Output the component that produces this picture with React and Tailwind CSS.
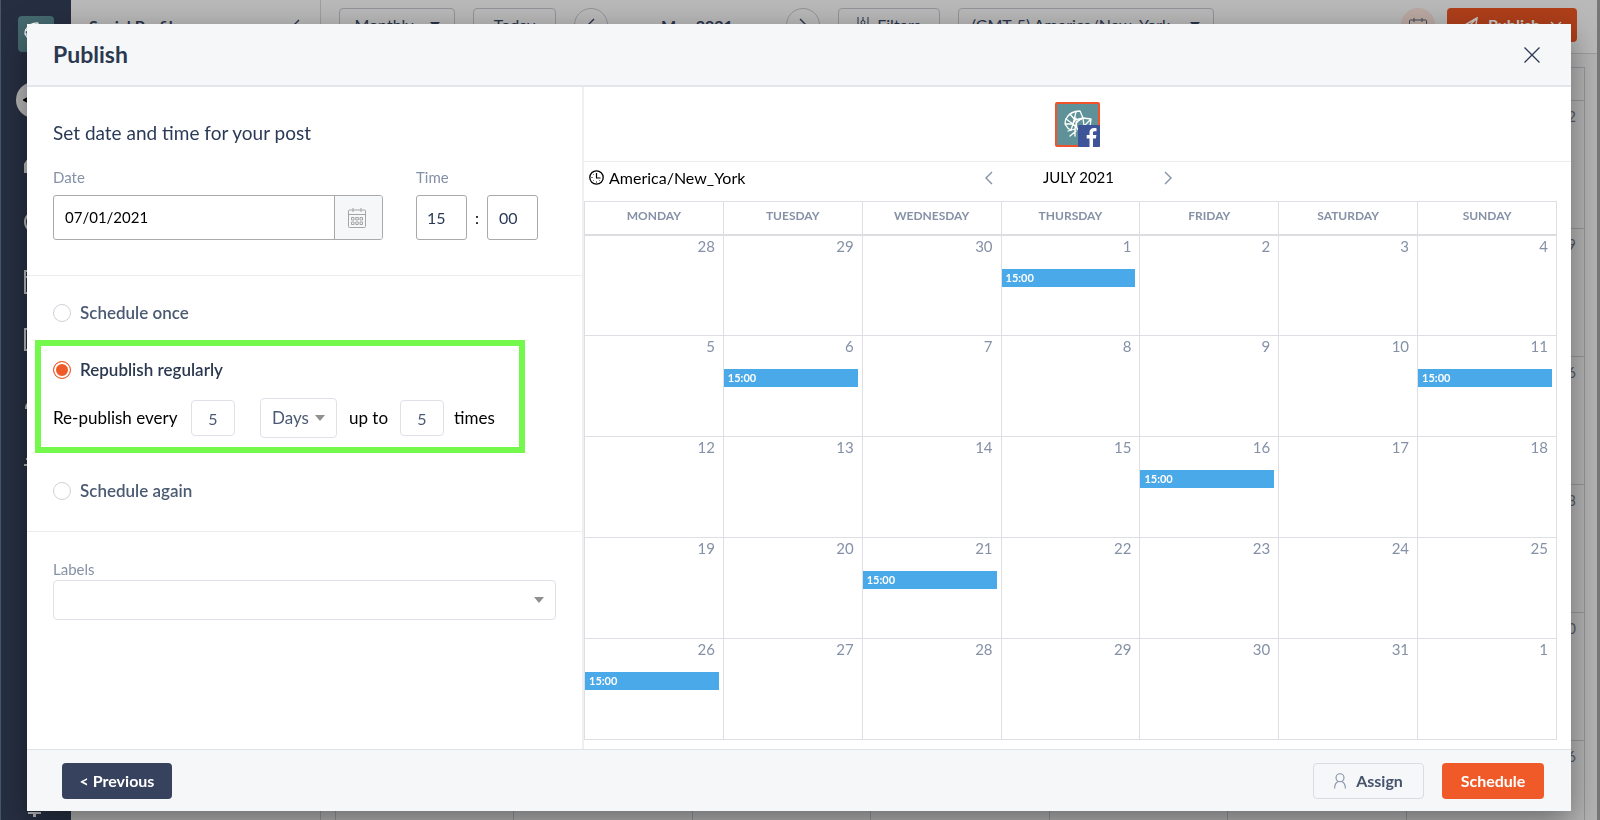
import React from "react";

const DAYS = ["MONDAY", "TUESDAY", "WEDNESDAY", "THURSDAY", "FRIDAY", "SATURDAY", "SUNDAY"];
const WEEKS = [
  [28, 29, 30, 1, 2, 3, 4],
  [5, 6, 7, 8, 9, 10, 11],
  [12, 13, 14, 15, 16, 17, 18],
  [19, 20, 21, 22, 23, 24, 25],
  [26, 27, 28, 29, 30, 31, 1],
];
const EVENTS = { "0-3": "15:00", "1-1": "15:00", "1-6": "15:00", "2-4": "15:00", "3-2": "15:00", "4-0": "15:00" };

function Leaf({ className }) {
  return (
    <svg className={className} viewBox="0 0 28 28" fill="none" stroke="currentColor" strokeWidth="1.3" strokeLinejoin="round" strokeLinecap="round">
      <path d="M7 20C2 18 0 13 2 9C5 3 11 1 16 1L19 8C15 9 11 13 11 19" />
      <path d="M2 9l7 5 3-12M6 4l5 6 8-2M1 14l8 0 3-6M7 20l2-6 3 3" />
      <path d="M19 8l8 1-1 8M12 12l7-4 1 8 7-7M20 16l-7 3-1-7M13 19l5 3M4 21l7-2 0 7M6 26l6-5" />
    </svg>
  );
}

function Chevron({ className, flip }) {
  return (
    <svg className={className} viewBox="0 0 8 14" fill="none" stroke="currentColor" strokeWidth="1.4">
      <path d={flip ? "M1 1l6 6-6 6" : "M7 1L1 7l6 6"} />
    </svg>
  );
}

function Caret({ className }) {
  return (
    <svg className={className} viewBox="0 0 10 6" fill="currentColor">
      <path d="M0 0h10L5 6z" />
    </svg>
  );
}

function CalendarIcon() {
  return (
    <svg className="h-5 w-[18px]" viewBox="0 0 18 20" fill="none" stroke="currentColor">
      <rect x="0.5" y="2" width="17" height="17.5" rx="1" />
      <path d="M0.5 6.5h17M5 0v4M13 0v4" />
      <path d="M3.500 9.500h2.500v2.500h-2.500zM7.750 9.500h2.500v2.500h-2.500zM12 9.500h2.500v2.500h-2.500zM3.500 14h2.500v2.500h-2.500zM7.750 14h2.500v2.500h-2.500zM12 14h2.500v2.500h-2.500z" />
    </svg>
  );
}

function SideNav() {
  return (
    <nav className="flex w-[71px] shrink-0 flex-col items-center overflow-hidden border-l border-[#47566a] bg-[#262f42] text-[#b5b5b5]">
      <div className="mt-4 flex h-9 w-9 items-center justify-center rounded bg-[#456a70] text-white">
        <Leaf className="h-6 w-6" />
      </div>
      <div className="mt-[30px] flex h-9 w-10 items-center rounded-full bg-[#b5b5b5] pl-[7px] text-black">
        <svg className="h-2 w-2" viewBox="0 0 8 8" fill="none" stroke="currentColor" strokeWidth="2"><path d="M7 1L1 4l6 3" /></svg>
      </div>
      <svg className="mt-8 h-[370px] w-6" viewBox="0 0 24 370" fill="none" stroke="currentColor" strokeWidth="2">
        <path d="M1 22v-8L9 3l9 11v8z" fill="currentColor" />
        <circle cx="11" cy="72" r="10" />
        <path d="M1 121h20v22H1zM1 127h20M1 179h18v21H1z" />
        <path d="M2 258c0-5 3-5 5-6-3-3-3-9 2-9s5 6 2 9c2 1 5 1 5 6zM0 315h20M2 309h16M4 302h10" />
      </svg>
      <svg className="mt-auto h-2 w-4" viewBox="0 0 16 8" fill="currentColor">
        <path d="M0 0h13v2H8v3H5V2H0z" />
      </svg>
    </nav>
  );
}

function ToolbarButton({ className, children }) {
  return (
    <button tabIndex={-1} className={"flex h-[34px] shrink-0 items-center justify-center rounded border border-[#929499] text-base text-[#29344b] " + className}>
      {children}
    </button>
  );
}

function BackgroundPage() {
  return (
    <div aria-hidden="true" className="flex h-screen overflow-hidden">
      <SideNav />
      <div className="flex min-w-0 flex-1 flex-col border-r-[3px] border-[#777777] bg-[#b3b3b3] text-[#29344b]">
        <div className="flex h-[54px] shrink-0 border-b border-[#9d9d9d] bg-[#b9b9b9]">
          <div className="flex w-[250px] shrink-0 justify-between border-r border-[#9c9ea2] pt-[14px] pr-5 pl-[18px]">
            <span className="text-base font-bold">Social Profiles</span>
            <Chevron className="mt-1 h-4 w-2" />
          </div>
          <div className="flex min-w-0 flex-1 gap-[18px] pt-2 pr-5 pl-[18px]">
            <ToolbarButton className="w-[116px] gap-4">Monthly<Caret className="h-1.5 w-2.5" /></ToolbarButton>
            <ToolbarButton className="w-[83px]">Today</ToolbarButton>
            <ToolbarButton className="w-[34px] !rounded-full"><Chevron className="h-4 w-2" /></ToolbarButton>
            <span className="w-[142px] shrink-0 pt-1.5 text-center text-base font-bold">May 2021</span>
            <ToolbarButton className="w-[34px] !rounded-full"><Chevron flip className="h-4 w-2" /></ToolbarButton>
            <ToolbarButton className="w-[102px] gap-2">
              <svg className="h-4 w-3" viewBox="0 0 12 16" fill="none" stroke="currentColor"><path d="M1 0v16M6 0v3M6 8v8M11 0v16" /><circle cx="6" cy="5.5" r="2" /></svg>
              Filters
            </ToolbarButton>
            <ToolbarButton className="w-[256px] gap-5">(GMT-5) America/New_York<Caret className="h-1.5 w-2.5" /></ToolbarButton>
            <div className="ml-auto flex h-[34px] w-[34px] shrink-0 justify-center rounded-full bg-[#baa9a2] pt-2.5 text-[#444b5a]"><CalendarIcon /></div>
            <button tabIndex={-1} className="-ml-1.5 flex h-[34px] w-[130px] shrink-0 items-center justify-center gap-2.5 rounded bg-[#b03f1a] text-base font-bold text-[#c9c9c9]">
              <svg className="h-4 w-4" viewBox="0 0 16 16" fill="none" stroke="currentColor" strokeWidth="1.5"><path d="M15 1L1 9l4 2 1 4 3-3 4 2zM15 1L5 11" /></svg>
              Publish
              <svg className="h-2 w-3" viewBox="0 0 12 8" fill="none" stroke="currentColor" strokeWidth="1.5"><path d="M1 1l5 5 5-5" /></svg>
            </button>
          </div>
        </div>
        <div className="flex flex-1 pr-3">
          <div className="w-[250px] shrink-0 border-r border-[#94969a]" />
          <div className="mt-[13px] ml-[14px] flex flex-1 flex-col border-r border-[#94969a] text-right text-[15px] text-[#555c6a]">
            <div className="h-[34px] shrink-0 border-y border-[#94969a]" />
            {["2", "9", "16", "23", "30", "6"].map((d) => (
              <div key={d} className="grid h-32 shrink-0 grid-cols-7 border-b border-[#94969a]">
                {DAYS.map((name, i) => (
                  <div key={name} className="border-l border-[#94969a] pt-1 pr-2">{i === 6 ? d : ""}</div>
                ))}
              </div>
            ))}
          </div>
        </div>
      </div>
    </div>
  );
}

const FIELD = "rounded-[3px] border border-[#a9a9a9] bg-white";
const SOFT_FIELD = "rounded border border-[#dfe1e8] bg-white";

function Option({ id, label, checked }) {
  return (
    <div className="flex h-5 items-center gap-[9px]">
      <input
        type="radio"
        id={id}
        name="mode"
        defaultChecked={checked}
        className="h-[18px] w-[18px] appearance-none rounded-full border border-[#cfd1d8] bg-white checked:border-[#f05a28] checked:bg-[#f05a28] checked:shadow-[inset_0_0_0_2px_#fff]"
      />
      <label htmlFor={id} className={checked ? "text-[17px] leading-5 font-semibold text-[#2b3850]" : "text-[17px] leading-5 font-semibold text-[#4b5a73]"}>{label}</label>
    </div>
  );
}

function SettingsPanel() {
  return (
    <section className="flex w-[557px] shrink-0 flex-col border-r-2 border-[#efeff1]">
      <div className="border-b border-[#ececec] px-[26px] pt-[34px] pb-[35px]">
        <h2 className="text-[19px] leading-6 text-[#2b3a57]">Set date and time for your post</h2>
        <div className="mt-5 flex gap-[33px]">
          <div>
            <label htmlFor="date" className="block text-[15px] leading-6 text-[#8591a6]">Date</label>
            <div className={"mt-1.5 flex h-[45px] w-[330px] overflow-hidden " + FIELD}>
              <input id="date" defaultValue="07/01/2021" className="min-w-0 flex-1 px-[11px] text-[15px] text-black outline-none" />
              <button aria-label="Open calendar" className="flex w-12 items-center justify-center border-l border-[#a9a9a9] bg-[#f5f7f8] pr-1 text-[#a5a5a5]">
                <CalendarIcon />
              </button>
            </div>
          </div>
          <div>
            <label htmlFor="hour" className="block text-[15px] leading-6 text-[#8591a6]">Time</label>
            <div className="mt-1.5 flex items-center text-base">
              <input id="hour" defaultValue="15" className={"h-[45px] w-[51px] px-2.5 text-[#2b3a57] " + FIELD} />
              <span className="w-5 text-center">:</span>
              <input aria-label="Minutes" defaultValue="00" className={"h-[45px] w-[51px] px-[11px] text-[#2b3a57] " + FIELD} />
            </div>
          </div>
        </div>
      </div>
      <div className="border-b border-[#ececec] pt-[27px] pb-[30px]">
        <div className="px-[26px]"><Option id="once" label="Schedule once" /></div>
        <div className="mt-[17px] mr-[57px] ml-2 border-[6px] border-[#74f84c] px-3 pt-3.5 pb-[9px]">
          <Option id="regular" label="Republish regularly" checked />
          <div className="mt-[18px] flex items-center text-[17px] whitespace-nowrap text-black">
            <label htmlFor="every" className="w-[138px]">Re-publish every</label>
            <input id="every" defaultValue="5" className={"h-9 w-11 text-center text-base text-[#4b5a73] " + SOFT_FIELD} />
            <span className="relative ml-[25px] flex">
              <select aria-label="Unit" className={"h-10 w-[77px] appearance-none pl-[11px] text-[#4b5a73] " + SOFT_FIELD}>
                <option>Days</option>
              </select>
              <Caret className="pointer-events-none absolute top-[17px] right-3 h-1.5 w-2.5 text-[#909090]" />
            </span>
            <label htmlFor="times" className="w-[63px] pl-3">up to</label>
            <input id="times" defaultValue="5" className={"h-9 w-11 text-center text-base text-[#4b5a73] " + SOFT_FIELD} />
            <span className="ml-2.5">times</span>
          </div>
        </div>
        <div className="mt-7 px-[26px]"><Option id="again" label="Schedule again" /></div>
      </div>
      <div className="px-[26px] pt-[26px]">
        <label htmlFor="labels" className="block text-[15px] leading-[22px] text-[#8591a6]">Labels</label>
        <div className="relative">
          <select id="labels" className={"block h-10 w-full appearance-none " + SOFT_FIELD}>
            <option></option>
          </select>
          <Caret className="pointer-events-none absolute top-[17px] right-3 h-1.5 w-2.5 text-[#909090]" />
        </div>
      </div>
    </section>
  );
}

function CalendarPanel() {
  return (
    <section className="flex min-w-0 flex-1 flex-col">
      <div className="flex h-[75px] items-center justify-center border-b border-[#ececec]">
        <div className="relative flex h-[45px] w-[45px] items-center justify-center rounded-[2px] border-2 border-[#f1512b] bg-[#5f9298] text-white">
          <Leaf className="h-7 w-7" />
          <svg className="absolute -right-0.5 -bottom-0.5 h-[22px] w-[22px]" viewBox="0 0 22 22">
            <rect width="22" height="22" rx="1" fill="#3d5498" />
            <path fill="#fff" d="M11.500 22v-8.500H8.700V10h2.800V7.500C11.500 4.600 13.300 3 16 3c1 0 2 .1 2.500.2v3.100h-1.900c-1.300 0-1.600.7-1.600 1.600V10h3.400l-.5 3.500H15V22z" />
          </svg>
        </div>
      </div>
      <div className="grid h-[39px] grid-cols-3 items-center pr-[14px] pb-2 text-black">
        <div className="flex items-center gap-[5px] pl-[5px] text-base">
          <svg className="h-[15px] w-[15px]" viewBox="0 0 15 15" fill="none" stroke="currentColor">
            <circle cx="7.500" cy="7.500" r="6.700" strokeWidth="1.300" />
            <path d="M7.500 3v5H11.500" strokeWidth="1.200" />
            <path d="M2.500 7.500h1M7.500 11.500v1M4 4l.5.500M4 11l.5-.5M11 11l-.5-.5" />
          </svg>
          America/New_York
        </div>
        <div className="flex items-center justify-center gap-[50px] pl-4 text-[15px]">
          <button aria-label="Previous month" className="text-[#8591a6]"><Chevron className="h-3.5 w-2" /></button>
          <span>JULY 2021</span>
          <button aria-label="Next month" className="text-[#8591a6]"><Chevron flip className="h-3.5 w-2" /></button>
        </div>
      </div>
      <div className="pr-[14px]">
        <table className="w-full table-fixed border-collapse border border-[#dedfe5]">
          <thead>
            <tr className="h-[33px] border-b-2 border-[#dcdde1]">
              {DAYS.map((d) => (
                <th key={d} className="border-r border-[#dedfe5] pb-1 text-xs font-bold text-[#8591a6]">{d}</th>
              ))}
            </tr>
          </thead>
          <tbody>
            {WEEKS.map((week, w) => (
              <tr key={w} className="h-[101px] border-b border-[#dedfe5] align-top">
                {week.map((day, i) => (
                  <td key={i} className="border-r border-[#dedfe5] p-0">
                    <div className="pr-2 text-right text-[15px] leading-5 text-[#8591a6]">{day}</div>
                    {EVENTS[w + "-" + i] && (
                      <div className="mt-[13px] mr-1 h-[18px] bg-[#4aa9e8] pl-1 text-[11px] leading-[18px] font-bold text-white">{EVENTS[w + "-" + i]}</div>
                    )}
                  </td>
                ))}
              </tr>
            ))}
          </tbody>
        </table>
      </div>
    </section>
  );
}

export default function App() {
  return (
    <div className="min-h-screen font-[Lato,sans-serif]">
      <BackgroundPage />
      <div className="fixed inset-0 flex flex-col pt-6 pr-[29px] pb-[9px] pl-[27px]">
        <div role="dialog" aria-label="Publish" className="flex min-h-0 flex-1 flex-col bg-white shadow-[0_10px_30px_rgba(0,0,0,0.4)]">
          <header className="flex h-[63px] shrink-0 items-center justify-between border-b-2 border-[#e4e6ec] bg-[#f6f7f9] pr-[31px] pl-[26px]">
            <h1 className="text-[23px] font-bold text-[#2b3850]">Publish</h1>
            <button aria-label="Close" className="text-[#2b3850]">
              <svg className="h-4 w-4" viewBox="0 0 16 16" stroke="currentColor" strokeWidth="1.300"><path d="M0.500 0.500l15 15M15.500 0.500l-15 15" /></svg>
            </button>
          </header>
          <div className="flex min-h-0 flex-1">
            <SettingsPanel />
            <CalendarPanel />
          </div>
          <footer className="flex h-[62px] shrink-0 items-center border-t border-[#e0e2e8] bg-[#f6f7f9] pr-[27px] pl-[35px] text-base font-bold">
            <button className="h-9 w-[110px] rounded bg-[#36425e] text-white">&lt; Previous</button>
            <button className="ml-auto flex h-9 w-[111px] items-center justify-center gap-2.5 rounded border border-[#dadce2] text-[#45536d]">
              <svg className="h-4 w-3" viewBox="0 0 12 16" fill="none" stroke="#8591a6" strokeWidth="1.100"><circle cx="6" cy="4.800" r="4" /><path d="M0.600 15.500c0-4 1.500-6 3.500-7M11.400 15.500c0-4-1.500-6-3.500-7" /></svg>
              Assign
            </button>
            <button className="ml-[18px] h-9 w-[102px] rounded bg-[#ef5a28] text-white">Schedule</button>
          </footer>
        </div>
      </div>
    </div>
  );
}
